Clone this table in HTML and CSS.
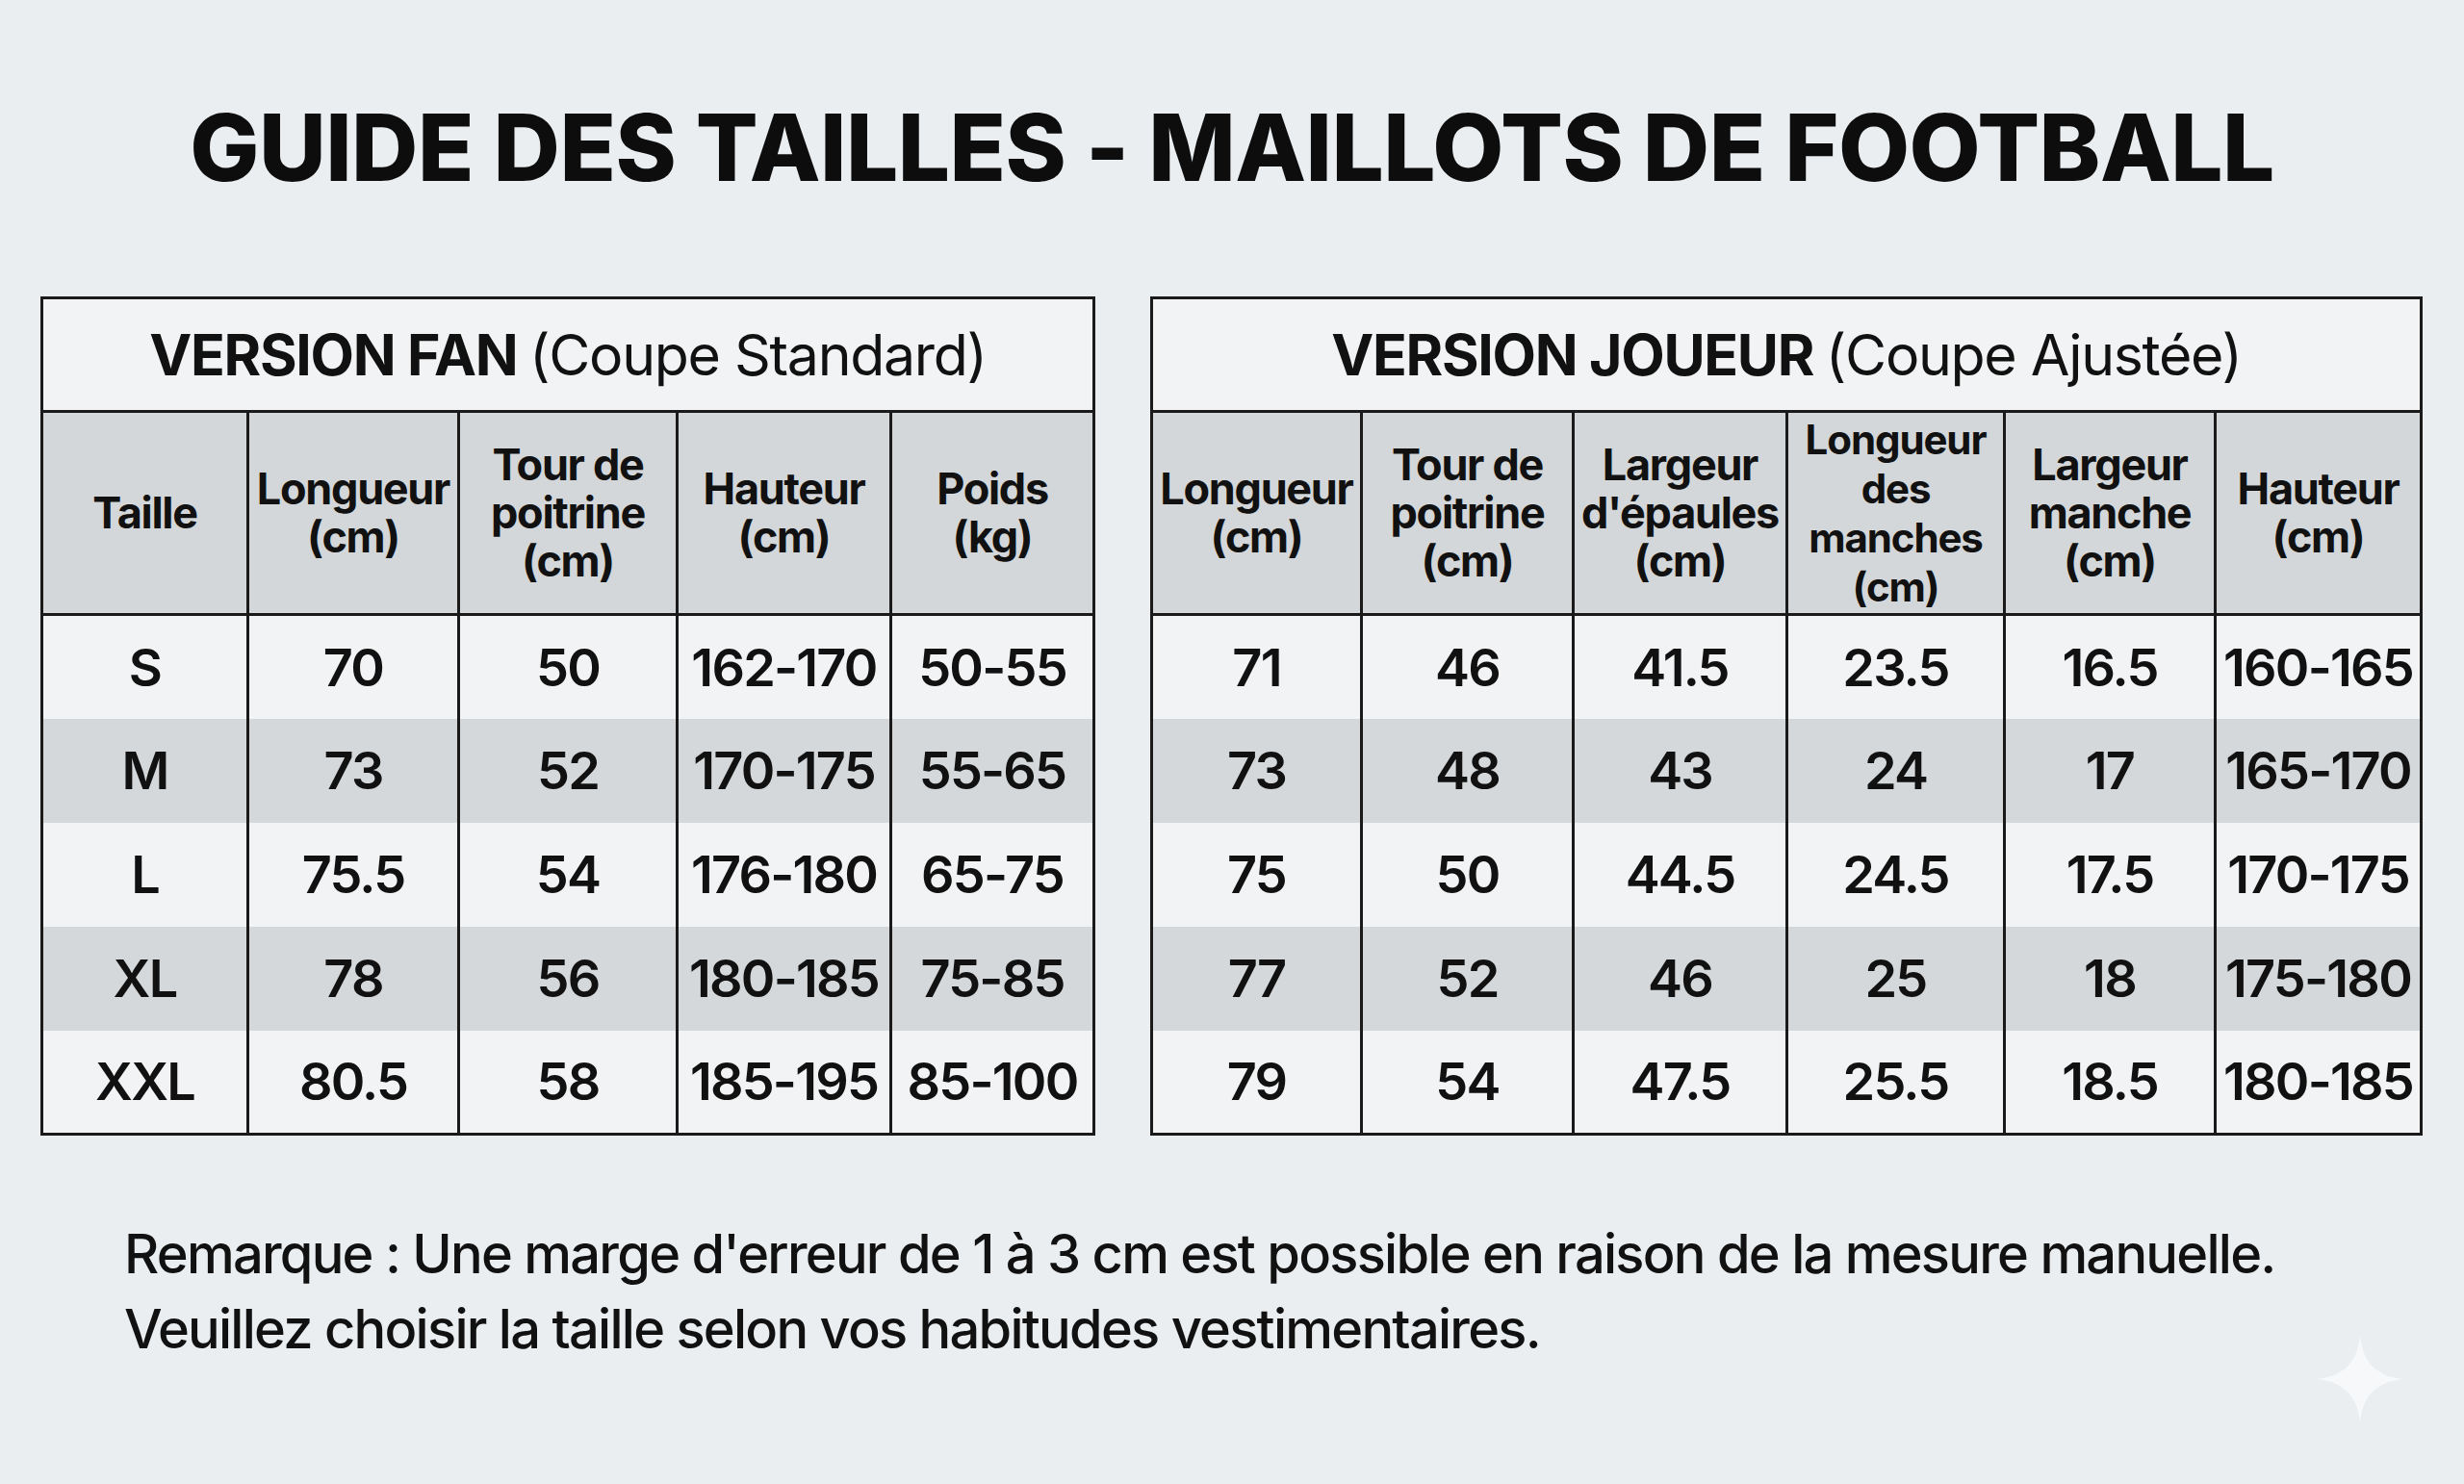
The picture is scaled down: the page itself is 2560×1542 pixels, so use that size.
FILE: index.html
```html
<!DOCTYPE html>
<html lang="fr">
<head>
<meta charset="utf-8">
<title>Guide des tailles - Maillots de football</title>
<link rel="stylesheet" href="styles.css">
</head>
<body>
<main class="page">
  <h1 class="title">GUIDE DES TAILLES - MAILLOTS DE FOOTBALL</h1>

  <section class="tables">
    <table class="chart chart-fan">
      <colgroup>
        <col class="c214"><col class="c219"><col class="c227"><col class="c222"><col>
      </colgroup>
      <thead>
        <tr class="caption-row">
          <th colspan="5"><strong>VERSION FAN</strong> <span class="sub">(Coupe Standard)</span></th>
        </tr>
        <tr class="head-row">
          <th>Taille</th>
          <th>Longueur<br>(cm)</th>
          <th>Tour de<br>poitrine<br>(cm)</th>
          <th>Hauteur<br>(cm)</th>
          <th>Poids<br>(kg)</th>
        </tr>
      </thead>
      <tbody>
        <tr><td>S</td><td>70</td><td>50</td><td>162-170</td><td>50-55</td></tr>
        <tr><td>M</td><td>73</td><td>52</td><td>170-175</td><td>55-65</td></tr>
        <tr><td>L</td><td>75.5</td><td>54</td><td>176-180</td><td>65-75</td></tr>
        <tr><td>XL</td><td>78</td><td>56</td><td>180-185</td><td>75-85</td></tr>
        <tr><td>XXL</td><td>80.5</td><td>58</td><td>185-195</td><td>85-100</td></tr>
      </tbody>
    </table>

    <table class="chart chart-player">
      <colgroup>
        <col class="c218"><col class="c220"><col class="c222"><col class="c226"><col class="c219"><col>
      </colgroup>
      <thead>
        <tr class="caption-row">
          <th colspan="6"><strong>VERSION JOUEUR</strong> <span class="sub">(Coupe Ajustée)</span></th>
        </tr>
        <tr class="head-row">
          <th>Longueur<br>(cm)</th>
          <th>Tour de<br>poitrine<br>(cm)</th>
          <th>Largeur<br>d'épaules<br>(cm)</th>
          <th class="tight">Longueur<br>des<br>manches<br>(cm)</th>
          <th>Largeur<br>manche<br>(cm)</th>
          <th>Hauteur<br>(cm)</th>
        </tr>
      </thead>
      <tbody>
        <tr><td>71</td><td>46</td><td>41.5</td><td>23.5</td><td>16.5</td><td>160-165</td></tr>
        <tr><td>73</td><td>48</td><td>43</td><td>24</td><td>17</td><td>165-170</td></tr>
        <tr><td>75</td><td>50</td><td>44.5</td><td>24.5</td><td>17.5</td><td>170-175</td></tr>
        <tr><td>77</td><td>52</td><td>46</td><td>25</td><td>18</td><td>175-180</td></tr>
        <tr><td>79</td><td>54</td><td>47.5</td><td>25.5</td><td>18.5</td><td>180-185</td></tr>
      </tbody>
    </table>
  </section>

  <p class="note">Remarque : Une marge d'erreur de 1 à 3 cm est possible en raison de la mesure manuelle.<br>Veuillez choisir la taille selon vos habitudes vestimentaires.</p>

  <svg class="sparkle" viewBox="0 0 90 90" aria-hidden="true">
    <path d="M45 0 C48 28 62 42 90 45 C62 48 48 62 45 90 C42 62 28 48 0 45 C28 42 42 28 45 0 Z"/>
  </svg>
</main>
</body>
</html>
```

FILE: styles.css
```css
* { box-sizing: border-box; }

html, body {
  margin: 0;
  padding: 0;
  background: #eaeef0;
}

body {
  width: 2560px;
  height: 1542px;
  overflow: hidden;
  font-family: "Inter", "Liberation Sans", sans-serif;
  color: #111;
}

.page {
  position: relative;
  width: 2560px;
  height: 1542px;
}

.title {
  margin: 0;
  padding-top: 93px;
  height: 308px;
  font-size: 96px;
  line-height: 120px;
  font-weight: 800;
  text-align: center;
  letter-spacing: -0.5px;
  color: #0d0d0d;
}

.tables {
  display: flex;
  gap: 57px;
  padding-left: 42px;
  align-items: flex-start;
}

.chart {
  flex: none;
  border-collapse: collapse;
  table-layout: fixed;
  border: 3px solid #1a1a1a;
}

.chart-fan { width: 1096px; }
.chart-player { width: 1322px; }

.c214 { width: 214px; }
.c218 { width: 218px; }
.c219 { width: 219px; }
.c220 { width: 220px; }
.c222 { width: 222px; }
.c226 { width: 226px; }
.c227 { width: 227px; }

.chart th,
.chart td {
  padding: 0;
  text-align: center;
  vertical-align: middle;
  border-left: 3px solid #1a1a1a;
  white-space: nowrap;
}

.caption-row th {
  height: 118px;
  background: #f1f3f4;
  border-bottom: 3px solid #1a1a1a;
  font-size: 59px;
  line-height: 1;
  letter-spacing: -1.3px;
}

.caption-row strong { font-weight: 700; }
.caption-row .sub { font-weight: 400; }

.head-row th {
  height: 211px;
  background: #d4d7d9;
  border-bottom: 3px solid #1a1a1a;
  font-size: 45px;
  line-height: 50px;
  font-weight: 700;
  letter-spacing: -1.3px;
}

.head-row th.tight {
  font-size: 42px;
  line-height: 51px;
  letter-spacing: -1.1px;
}

.chart td {
  height: 108px;
  font-size: 54px;
  font-weight: 600;
  letter-spacing: -1.8px;
  background: #f1f3f4;
}

.chart tbody tr:nth-child(even) td { background: #d5d8da; }

.note {
  margin: 84px 0 0;
  padding-left: 129px;
  font-size: 56px;
  line-height: 78px;
  font-weight: 500;
  letter-spacing: -1.75px;
  color: #111;
}

.sparkle {
  position: absolute;
  left: 2407px;
  top: 1388px;
  width: 90px;
  height: 90px;
  fill: #f6f8f9;
}
```
